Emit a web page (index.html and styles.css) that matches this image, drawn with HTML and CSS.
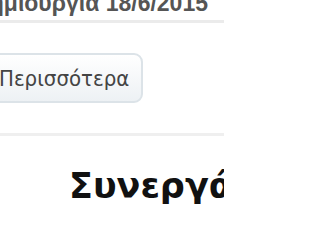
FILE: index.html
```html
<!DOCTYPE html>
<html lang="el">
<head>
<meta charset="utf-8">
<link rel="stylesheet" href="styles.css">
</head>
<body>
<div class="page">
  <div class="meta"><span class="meta-text">Δημιουργία 18/6/2015</span></div>
  <div class="actions"><button class="more">Περισσότερα</button></div>
  <h2 class="title">Συνεργάτες</h2>
</div>
</body>
</html>
```

FILE: styles.css
```css
html, body {
  margin: 0;
  padding: 0;
  background: #fff;
}
body {
  width: 224px;
  height: 241px;
  overflow: hidden;
}
.page {
  width: 224px;
  overflow: hidden;
}
.meta {
  height: 20px;
  border-bottom: 3px solid #ebebeb;
  display: flex;
  justify-content: flex-end;
  align-items: flex-end;
  padding-right: 16px;
  overflow: hidden;
}
.meta-text {
  font-family: "Liberation Sans", Arial, sans-serif;
  font-weight: bold;
  font-size: 23px;
  line-height: 23px;
  color: #555;
  white-space: nowrap;
  margin-bottom: 5px;
}
.actions {
  padding: 30px 0 30px 0;
  border-bottom: 3px solid #efefef;
}
.more {
  display: flex;
  align-items: center;
  margin-left: -12px;
  width: 155px;
  height: 50px;
  padding: 0 0 0 9px;
  border: 2px solid #dce3e8;
  border-radius: 9px;
  background: linear-gradient(#ffffff, #edf1f4);
  font-family: Tahoma, "DejaVu Sans Condensed", "Liberation Sans", sans-serif;
  font-size: 22px;
  color: #444;
  white-space: nowrap;
}
.title {
  margin: 33px 0 0 69px;
  font-family: "DejaVu Sans", Verdana, sans-serif;
  font-weight: bold;
  font-size: 35px;
  line-height: 35px;
  color: #111;
  white-space: nowrap;
}
```
